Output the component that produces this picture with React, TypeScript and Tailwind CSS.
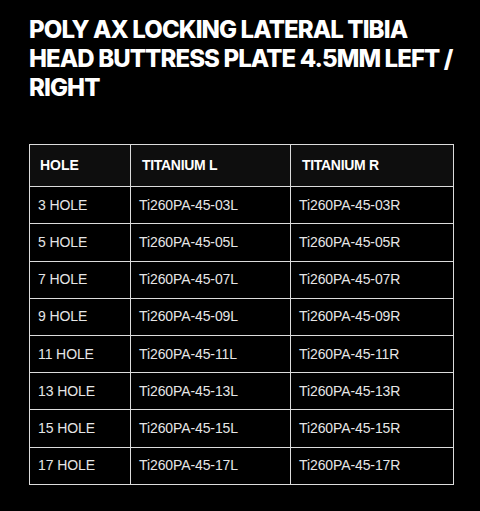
const rows = [
  ['3 HOLE', 'Ti260PA-45-03L', 'Ti260PA-45-03R'],
  ['5 HOLE', 'Ti260PA-45-05L', 'Ti260PA-45-05R'],
  ['7 HOLE', 'Ti260PA-45-07L', 'Ti260PA-45-07R'],
  ['9 HOLE', 'Ti260PA-45-09L', 'Ti260PA-45-09R'],
  ['11 HOLE', 'Ti260PA-45-11L', 'Ti260PA-45-11R'],
  ['13 HOLE', 'Ti260PA-45-13L', 'Ti260PA-45-13R'],
  ['15 HOLE', 'Ti260PA-45-15L', 'Ti260PA-45-15R'],
  ['17 HOLE', 'Ti260PA-45-17L', 'Ti260PA-45-17R'],
]

export default function App() {
  return (
    <div className="min-h-[511px] w-[480px] bg-black pl-[29px] pt-[15px]">
      {/* Title */}
      <h1 className="w-[440px] font-['Inter',sans-serif] text-[24px] font-extrabold leading-[29px] tracking-[-0.9px] text-white uppercase">
        Poly AX Locking Lateral Tibia Head Buttress Plate 4.5mm Left / Right
      </h1>

      {/* Table */}
      <table className="mt-[42px] w-[424px] table-fixed border-collapse font-['Liberation_Sans',Arial,sans-serif] text-[14px]">
        <colgroup>
          <col className="w-[101px]" />
          <col className="w-[160px]" />
          <col className="w-[163px]" />
        </colgroup>
        <thead>
          <tr className="h-[42.3px] bg-[#0e0e0e]">
            <th className="border border-[#dcdcdc] pl-[10px] text-left font-bold text-white">HOLE</th>
            <th className="border border-[#dcdcdc] pl-[11px] text-left font-bold tracking-[-0.3px] text-white">TITANIUM L</th>
            <th className="border border-[#dcdcdc] pl-[11px] text-left font-bold tracking-[-0.3px] text-white">TITANIUM R</th>
          </tr>
        </thead>
        <tbody>
          {rows.map(r => (
            <tr key={r[0]} className="h-[37.2px]">
              {r.map((c, i) => (
                <td
                  key={i}
                  className="border border-[#dcdcdc] pl-[8px] tracking-[-0.1px] text-[#e6e6e6]"
                >
                  {c}
                </td>
              ))}
            </tr>
          ))}
        </tbody>
      </table>
    </div>
  )
}
